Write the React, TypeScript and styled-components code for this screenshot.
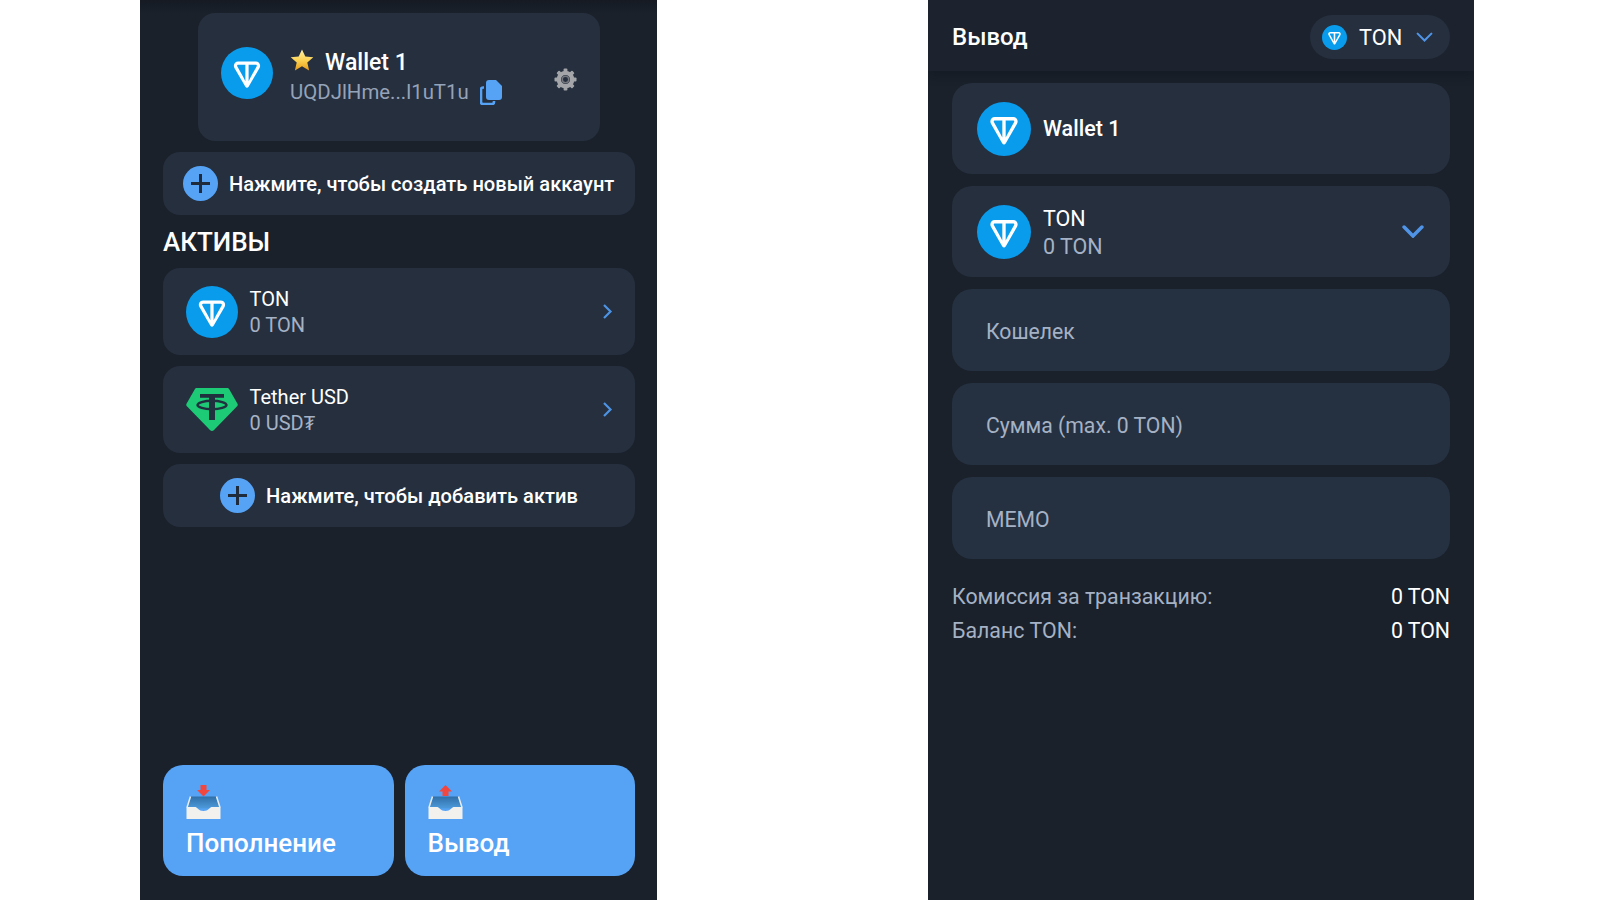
import React from 'react'
import styled, { createGlobalStyle } from 'styled-components'

const GlobalStyle = createGlobalStyle`
  html, body {
    margin: 0;
    padding: 0;
    background: #fff;
  }
  body {
    font-family: Roboto, "Noto Sans", sans-serif;
    -webkit-font-smoothing: antialiased;
  }
  * {
    box-sizing: border-box;
  }
`

const Page = styled.div`
  width: 1600px;
  height: 900px;
  overflow: hidden;
  display: flex;
  padding-left: 140px;
  gap: 271px;
`

const Panel = styled.div<{ $width: number }>`
  width: ${({ $width }) => $width}px;
  height: 900px;
  overflow: hidden;
  background: #1a212b;
  display: flex;
  flex-direction: column;
`

const Overview = styled(Panel)`
  padding: 13px 22px 24px 23px;
  background: linear-gradient(#151a23 0, #1a212b 14px);
`

const WalletCard = styled.div`
  width: 402px;
  height: 128px;
  margin: 0 auto 0 35px;
  padding: 34px 23px 0;
  flex: none;
  background: #252f3e;
  border-radius: 17px;
  display: flex;
  align-items: flex-start;
`

const WalletInfo = styled.div`
  margin-left: 17px;
  display: flex;
  flex-direction: column;
`

const WalletName = styled.div`
  display: flex;
  align-items: center;
  gap: 11px;
  height: 27px;
  margin-top: 2px;
  color: #fff;
  font-size: 23px;
  font-weight: 500;
`

const AddressRow = styled.div`
  display: flex;
  align-items: center;
  gap: 11px;
  margin-top: 2px;
  height: 28px;
  color: #95a3b8;
  font-size: 20.4px;
`

const Gear = styled.svg`
  margin: 21px 0 0 auto;
`

const ActionRow = styled.div<{ $centered?: boolean }>`
  height: 63px;
  flex: none;
  margin-top: 11px;
  padding-left: ${({ $centered }) => ($centered ? 0 : 20)}px;
  background: #252f3e;
  border-radius: 17px;
  display: flex;
  align-items: center;
  justify-content: ${({ $centered }) => ($centered ? 'center' : 'flex-start')};
  gap: 11px;
  color: #fff;
  font-size: 20.1px;
  font-weight: 500;
`

const SectionTitle = styled.div`
  margin: 9px 0 8px;
  height: 36px;
  display: flex;
  align-items: center;
  color: #fff;
  font-size: 26px;
  font-weight: 500;
`

const AssetList = styled.div`
  display: flex;
  flex-direction: column;
  gap: 11px;
`

const AssetRow = styled.div`
  height: 87px;
  padding: 0 22px 0 23px;
  background: #252f3e;
  border-radius: 17px;
  display: flex;
  align-items: center;
  gap: 11.5px;
`

const AssetText = styled.div<{ $gap?: number }>`
  flex: 1;
  padding-top: 2px;
  display: flex;
  flex-direction: column;
  gap: ${({ $gap }) => $gap ?? 1}px;
`

const AssetName = styled.div<{ $size?: number }>`
  color: #fff;
  font-size: ${({ $size }) => $size ?? 20}px;
  line-height: 25px;
`

const AssetAmount = styled.div<{ $size?: number }>`
  color: #a5b2c5;
  font-size: ${({ $size }) => $size ?? 20}px;
  line-height: 25px;
`

const Actions = styled.div`
  margin-top: auto;
  display: flex;
  gap: 11px;
`

const BigButton = styled.div`
  flex: 1;
  height: 111px;
  padding: 20px 23px 0;
  background: #56a3f6;
  border-radius: 20px;
  color: #fff;
  font-size: 26px;
  line-height: 30px;
  font-weight: 500;
  display: flex;
  flex-direction: column;
  gap: 8px;
`

const Withdraw = styled(Panel)`
  padding-bottom: 24px;
`

const Header = styled.div`
  height: 71px;
  flex: none;
  padding: 3px 24px 0;
  background: #1c232e;
  box-shadow: 0 4px 10px rgba(10, 13, 20, 0.3);
  display: flex;
  align-items: center;
  justify-content: space-between;
`

const HeaderTitle = styled.div`
  color: #fff;
  font-size: 24px;
  font-weight: 500;
`

const TokenPill = styled.div`
  width: 140px;
  height: 44px;
  padding-left: 12px;
  background: #252f3e;
  border-radius: 22px;
  display: flex;
  align-items: center;
  color: #fff;
  font-size: 21.8px;
`

const PillLabel = styled.span`
  margin: 0 14px 0 12px;
`

const Form = styled.div`
  padding: 12px 24px 0;
  display: flex;
  flex-direction: column;
  gap: 12px;
`

const SelectCard = styled.div`
  height: 91px;
  padding: 0 26px 0 25px;
  background: #252f3e;
  border-radius: 20px;
  display: flex;
  align-items: center;
  gap: 12px;
`

const SelectName = styled.div`
  color: #fff;
  font-size: 21.5px;
  font-weight: 500;
`

const Field = styled.div`
  height: 82px;
  padding: 2px 34px 0;
  background: #253141;
  border-radius: 20px;
  display: flex;
  align-items: center;
  color: #a5b2c5;
  font-size: 21.2px;
`

const FeeList = styled.div`
  margin-top: 23px;
  padding: 0 24px;
  display: flex;
  flex-direction: column;
  gap: 6px;
`

const FeeRow = styled.div`
  height: 28px;
  display: flex;
  align-items: center;
  justify-content: space-between;
  color: #a5b2c5;
  font-size: 21.3px;
`

const FeeValue = styled.span`
  color: #fff;
`

const TonLogo = ({ size = 52 }: { size?: number }) => (
  <svg width={size} height={size} viewBox="0 0 56 56" style={{ flex: 'none' }}>
    <circle cx="28" cy="28" r="28" fill="#0a9cec" />
    <path
      fill="#fff"
      d="M37.56 15.63H18.44c-3.52 0-5.74 3.79-3.98 6.86l11.8 20.45c.77 1.34 2.7 1.34 3.47 0l11.8-20.45c1.77-3.06-.46-6.86-3.97-6.86zM26.25 36.81l-2.57-4.97-6.2-11.1c-.41-.7.1-1.62.95-1.62h7.82v17.69zm12.26-16.07-6.2 11.1-2.57 4.97V19.12h7.82c.85 0 1.36.91.95 1.62z"
    />
  </svg>
)

const TetherLogo = () => (
  <svg width="52" height="45" viewBox="0 0 52 45" style={{ flex: 'none' }}>
    <path
      fill="#1dca76"
      d="M11 1h30c1 0 1.800.5 2.200 1.300l8.300 14.400c.5.900.3 1.900-.4 2.600L27.800 43.300c-1 1-2.600 1-3.600 0L.9 19.300c-.7-.7-.9-1.700-.4-2.600L8.800 2.300C9.200 1.500 10 1 11 1z"
    />
    <path fill="#20303e" d="M14 7h24v3.800H29V33h-6V10.800h-9z" />
    <ellipse cx="26" cy="18" rx="14.500" ry="4.200" fill="none" stroke="#20303e" strokeWidth="2.400" />
  </svg>
)

const PlusBadge = () => (
  <svg width="35" height="35" viewBox="0 0 35 35" style={{ flex: 'none' }}>
    <circle cx="17.500" cy="17.500" r="17.500" fill="#56a3f6" />
    <path d="M17.500 8v19M8 17.500h19" stroke="#1f2a3a" strokeWidth="3" />
  </svg>
)

const Star = () => (
  <svg width="24" height="22" viewBox="0 0 24 22" style={{ flex: 'none', marginTop: -5 }}>
    <defs>
      <linearGradient id="star-fill" x1="0" y1="0" x2="0" y2="1">
        <stop offset="0" stopColor="#fff3a8" />
        <stop offset="0.55" stopColor="#fbcf4c" />
        <stop offset="1" stopColor="#e99a1b" />
      </linearGradient>
    </defs>
    <path
      fill="url(#star-fill)"
      d="M12 .5l3.300 7 8 .8-6 5.300 1.800 7.800L12 17.300 4.900 21.400l1.800-7.800-6-5.300 8-.8z"
    />
  </svg>
)

const CopyIcon = () => (
  <svg width="22" height="25" viewBox="0 0 22 25" style={{ flex: 'none' }}>
    <path d="M4 7.500H3a2 2 0 0 0-2 2V22a2 2 0 0 0 2 2h9a2 2 0 0 0 2-2v-1" fill="none" stroke="#56a3f6" strokeWidth="2.600" />
    <path fill="#56a3f6" d="M9 0h7l6 6v11a3 3 0 0 1-3 3H9a3 3 0 0 1-3-3V3a3 3 0 0 1 3-3z" />
  </svg>
)

const GearIcon = () => {
  const teeth = [0, 45, 90, 135, 180, 225, 270, 315]
  return (
    <Gear width="23" height="23" viewBox="0 0 24 24">
      {teeth.map((angle) => (
        <rect key={angle} x="10" y="0.500" width="4" height="5" rx="1" fill="#a3a5a8" transform={`rotate(${angle} 12 12)`} />
      ))}
      <circle cx="12" cy="12" r="7" fill="none" stroke="#a3a5a8" strokeWidth="4.500" />
      <circle cx="12" cy="12" r="3.400" fill="none" stroke="#74777d" strokeWidth="1.600" />
    </Gear>
  )
}

const ChevronRight = () => (
  <svg width="11" height="17" viewBox="0 0 11 17" style={{ flex: 'none' }}>
    <path d="M2 2l6.500 6.500L2 15" fill="none" stroke="#4d93e3" strokeWidth="2.200" />
  </svg>
)

const ChevronDown = ({ width, stroke }: { width: number; stroke: number }) => (
  <svg width={width} height={width * 0.62} viewBox="0 0 21 13" style={{ flex: 'none' }}>
    <path d="M2 2l8.500 8.500L19 2" fill="none" stroke="#4f94e6" strokeWidth={stroke} strokeLinecap="round" />
  </svg>
)

const InboxEmoji = ({ up }: { up?: boolean }) => (
  <svg width="35" height="35" viewBox="0 0 35 35">
    <defs>
      <linearGradient id="tray-well" x1="0" y1="0" x2="0" y2="1">
        <stop offset="0" stopColor="#2f6fa8" />
        <stop offset="1" stopColor="#4d9bdc" />
      </linearGradient>
    </defs>
    <path
      fill="#f2473f"
      d={up ? 'M17.500 0l6.500 6.500h-3.500V11h-6V6.500H11z' : 'M14.500 0h6v5H24l-6.500 6.500L11 5h3.500z'}
    />
    <path fill="url(#tray-well)" d="M4.500 11.500h26l3.500 12H1z" />
    <path fill="#f3f1ee" d="M0.500 22h9c1.500 0 3 4 8 4s6.500-4 8-4h9v12H.5z" />
    <path fill="none" stroke="#e9edf0" strokeWidth="1.500" d="M1 22.500l3.500-11M34 22.500l-3.500-11" />
  </svg>
)

const App: React.FC = () => {
  return (
    <Page>
      <GlobalStyle />
      <Overview $width={517}>
        <WalletCard>
          <TonLogo />
          <WalletInfo>
            <WalletName>
              <Star />
              Wallet 1
            </WalletName>
            <AddressRow>
              UQDJlHme...l1uT1u
              <CopyIcon />
            </AddressRow>
          </WalletInfo>
          <GearIcon />
        </WalletCard>
        <ActionRow>
          <PlusBadge />
          Нажмите, чтобы создать новый аккаунт
        </ActionRow>
        <SectionTitle>АКТИВЫ</SectionTitle>
        <AssetList>
          <AssetRow>
            <TonLogo />
            <AssetText>
              <AssetName>TON</AssetName>
              <AssetAmount>0 TON</AssetAmount>
            </AssetText>
            <ChevronRight />
          </AssetRow>
          <AssetRow>
            <TetherLogo />
            <AssetText>
              <AssetName>Tether USD</AssetName>
              <AssetAmount>0 USD₮</AssetAmount>
            </AssetText>
            <ChevronRight />
          </AssetRow>
        </AssetList>
        <ActionRow $centered>
          <PlusBadge />
          Нажмите, чтобы добавить актив
        </ActionRow>
        <Actions>
          <BigButton>
            <InboxEmoji />
            Пополнение
          </BigButton>
          <BigButton>
            <InboxEmoji up />
            Вывод
          </BigButton>
        </Actions>
      </Overview>
      <Withdraw $width={546}>
        <Header>
          <HeaderTitle>Вывод</HeaderTitle>
          <TokenPill>
            <TonLogo size={25} />
            <PillLabel>TON</PillLabel>
            <ChevronDown width={17} stroke={2.600} />
          </TokenPill>
        </Header>
        <Form>
          <SelectCard>
            <TonLogo size={54} />
            <SelectName>Wallet 1</SelectName>
          </SelectCard>
          <SelectCard>
            <TonLogo size={54} />
            <AssetText $gap={3}>
              <AssetName $size={21.5}>TON</AssetName>
              <AssetAmount $size={21.5}>0 TON</AssetAmount>
            </AssetText>
            <ChevronDown width={22} stroke={3.400} />
          </SelectCard>
          <Field>Кошелек</Field>
          <Field>Сумма (max. 0 TON)</Field>
          <Field>МЕМО</Field>
        </Form>
        <FeeList>
          <FeeRow>
            Комиссия за транзакцию:
            <FeeValue>0 TON</FeeValue>
          </FeeRow>
          <FeeRow>
            Баланс TON:
            <FeeValue>0 TON</FeeValue>
          </FeeRow>
        </FeeList>
      </Withdraw>
    </Page>
  )
}

export default App
